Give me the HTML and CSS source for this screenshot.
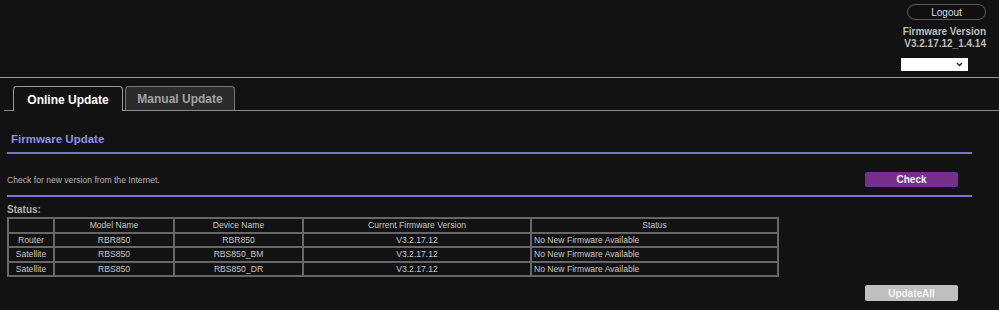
FILE: index.html
```html
<!DOCTYPE html>
<html lang="en">
<head>
    <meta charset="UTF-8">
    <meta name="viewport" content="width=device-width, initial-scale=1.0">
    <title>Firmware Update</title>
    <link rel="stylesheet" href="styles.css">
</head>
<body>
    <header class="top">
        <div class="account">
            <button class="logout">Logout</button>
            <div class="fw-label">Firmware Version<br>V3.2.17.12_1.4.14</div>
            <div class="lang-select">
                <svg width="7" height="5" viewBox="0 0 7 5"><path d="M1 1 L3.5 3.5 L6 1" fill="none" stroke="#222" stroke-width="1.5"/></svg>
            </div>
        </div>
    </header>

    <div class="tabs">
        <div class="tab active">Online Update</div>
        <div class="tab">Manual Update</div>
    </div>

    <div class="panel">
        <h2 class="section-title">Firmware Update</h2>
        <div class="check-row">
            <span>Check for new version from the Internet.</span>
            <button class="btn btn-purple">Check</button>
        </div>

        <div class="status-label">Status:</div>
        <table class="status-table">
            <colgroup>
                <col style="width: 46px">
                <col style="width: 120px">
                <col style="width: 129px">
                <col style="width: 228px">
                <col style="width: 247px">
            </colgroup>
            <tr>
                <td></td>
                <td>Model Name</td>
                <td>Device Name</td>
                <td>Current Firmware Version</td>
                <td>Status</td>
            </tr>
            <tr>
                <td>Router</td>
                <td>RBR850</td>
                <td>RBR850</td>
                <td>V3.2.17.12</td>
                <td class="left">No New Firmware Available</td>
            </tr>
            <tr>
                <td>Satellite</td>
                <td>RBS850</td>
                <td>RBS850_BM</td>
                <td>V3.2.17.12</td>
                <td class="left">No New Firmware Available</td>
            </tr>
            <tr>
                <td>Satellite</td>
                <td>RBS850</td>
                <td>RBS850_DR</td>
                <td>V3.2.17.12</td>
                <td class="left">No New Firmware Available</td>
            </tr>
        </table>

        <div class="actions">
            <button class="btn btn-grey">UpdateAll</button>
        </div>
    </div>
</body>
</html>
```

FILE: styles.css
```css
body {
    margin: 0;
    padding: 0;
    background-color: #121212;
    font-family: "Liberation Sans", Arial, sans-serif;
    color: #c4c4c4;
}

.top {
    height: 77px;
    border-bottom: 1px solid #9a9a9a;
    display: flex;
    justify-content: flex-end;
    padding-right: 13px;
}

.account {
    width: 86px;
    display: flex;
    flex-direction: column;
    align-items: flex-end;
    padding-top: 4px;
}

.logout {
    width: 79px;
    height: 16px;
    padding: 0;
    background: #111;
    border: 1px solid #5a5a5a;
    border-radius: 8px;
    color: #dcdcdc;
    font-family: inherit;
    font-size: 10px;
}

.fw-label {
    margin-top: 6px;
    font-size: 10px;
    font-weight: bold;
    line-height: 12px;
    text-align: right;
    color: #bdbdbd;
}

.lang-select {
    align-self: flex-start;
    margin: 8px 0 0 1px;
    width: 67px;
    height: 13px;
    background: #fff;
    display: flex;
    align-items: center;
    justify-content: flex-end;
    padding-right: 5px;
    box-sizing: border-box;
}

.tabs {
    margin: 8px 0 0 4px;
    padding-left: 9px;
    display: flex;
    align-items: flex-end;
    gap: 2px;
    border-bottom: 1px solid #8a8a8a;
}

.tab {
    width: 108px;
    height: 23px;
    line-height: 24px;
    text-align: center;
    font-size: 12px;
    font-weight: bold;
    color: #a2a2a2;
    background: #2b2b2b;
    border: 1px solid #777;
    border-bottom: none;
    border-radius: 4px 4px 0 0;
}

.tab.active {
    height: 24px;
    margin-bottom: -1px;
    line-height: 26px;
    color: #fff;
    background: #121212;
    border-color: #9a9a9a;
}

.panel {
    padding: 0 27px 0 7px;
}

.section-title {
    margin: 21px 0 0;
    padding: 0 0 6px 4px;
    font-size: 11.5px;
    line-height: 14px;
    color: #9191e4;
    border-bottom: 2px solid #7474d2;
}

.check-row {
    display: flex;
    align-items: center;
    justify-content: space-between;
    padding: 18px 14px 8px 0;
    font-size: 8.6px;
    color: #b4b4b4;
    border-bottom: 2px solid #7474d2;
}

.btn {
    width: 93px;
    height: 15px;
    padding: 0;
    border: none;
    border-radius: 2px;
    font-family: inherit;
    font-size: 10px;
    font-weight: bold;
}

.btn-purple {
    background: #76308c;
    color: #f2f2f2;
}

.btn-grey {
    height: 16px;
    background: #bfbfbf;
    color: #f4f4f4;
}

.status-label {
    margin-top: 6px;
    font-size: 10px;
    font-weight: bold;
    line-height: 14px;
    color: #b0b0b0;
}

.status-table {
    width: 770px;
    table-layout: fixed;
    border-collapse: separate;
    border-spacing: 0;
    border: 1px solid #676767;
    font-size: 8.6px;
    color: #c6c6c6;
}

.status-table td {
    border: 1px solid #676767;
    padding: 0;
    line-height: 12.5px;
    text-align: center;
    white-space: nowrap;
}

.status-table td.left {
    text-align: left;
    padding-left: 2px;
}

.actions {
    display: flex;
    justify-content: flex-end;
    padding-right: 14px;
    margin-top: 8px;
}
```
